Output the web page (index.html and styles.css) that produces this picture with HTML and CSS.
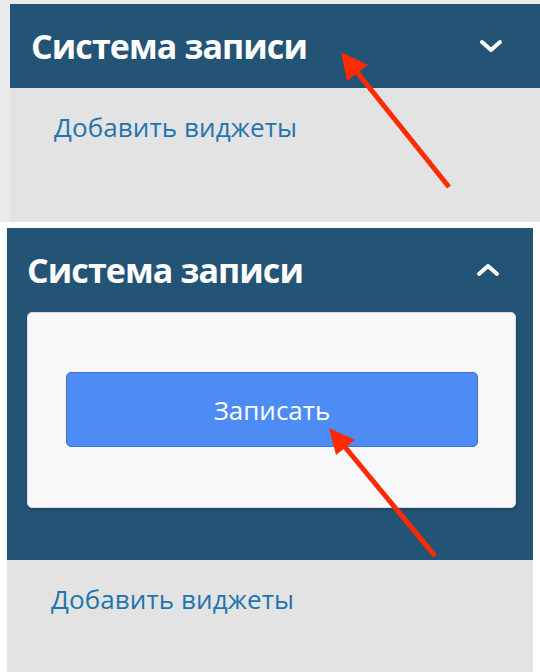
FILE: index.html
```html
<!DOCTYPE html>
<html lang="ru">
<head>
  <meta charset="UTF-8">
  <title>Система записи</title>
  <meta name="viewport" content="width=device-width, initial-scale=1.0">
  <link rel="stylesheet" href="styles.css">
</head>
<body>
  <div class="page">

    <!-- collapsed widget -->
    <section class="shot shot-closed">
      <div class="widget">
        <header class="widget-head">
          <h2 class="widget-title">Система записи</h2>
          <svg class="chev" width="24" height="14" viewBox="0 0 24 14">
            <polyline points="3,3 12,11 21,3" fill="none" stroke="#fff" stroke-width="4" stroke-linecap="round" stroke-linejoin="round"/>
          </svg>
        </header>
        <div class="widget-foot foot-closed">
          <a href="#" class="add-link">Добавить виджеты</a>
        </div>
      </div>
    </section>

    <!-- open widget -->
    <section class="shot shot-open">
      <div class="widget widget-open">
        <header class="widget-head head-open">
          <h2 class="widget-title">Система записи</h2>
          <svg class="chev" width="24" height="14" viewBox="0 0 24 14">
            <polyline points="3,11 12,3 21,11" fill="none" stroke="#fff" stroke-width="4" stroke-linecap="round" stroke-linejoin="round"/>
          </svg>
        </header>
        <div class="card">
          <button class="btn-book">Записать</button>
        </div>
      </div>
      <div class="widget-foot foot-open">
        <a href="#" class="add-link">Добавить виджеты</a>
      </div>
    </section>

    <!-- annotation arrows -->
    <svg class="arrows" width="540" height="672" viewBox="0 0 540 672">
      <line x1="449" y1="187" x2="352" y2="66" stroke="#ff2a00" stroke-width="5"/>
      <polygon points="341,52 368,65 347,81" fill="#ff2a00"/>
      <line x1="435" y1="556" x2="340" y2="441" stroke="#ff2a00" stroke-width="5"/>
      <polygon points="329,428 355,440 336,455" fill="#ff2a00"/>
    </svg>
  </div>
</body>
</html>
```

FILE: styles.css
```css
*{box-sizing:border-box;margin:0;padding:0}
html,body{background:#fff;height:100%}
body{font-family:"Open Sans",Arial,sans-serif;overflow:hidden}
.page{position:relative;width:540px;height:672px;overflow:hidden}

.shot-closed{
  background:#eaeaea;
  padding:4px 0 0 10px;
  height:222px;
}
.shot-open{
  margin:6px 7px 0 7px;
  width:526px;
}

.widget-head{
  display:flex;justify-content:space-between;align-items:center;
  background:#235375;
  height:84px;
  padding:0 37px 0 21px;
}
.widget-title{
  font-size:34px;font-weight:700;color:#fff;
  letter-spacing:-0.9px;
}
.chev{display:block}

.widget-foot{background:#e3e3e3}
.foot-closed{height:134px;padding:21px 0 0 44px}
.foot-open{height:120px;padding:21px 0 0 44px}
.add-link{
  font-size:26px;color:#1f75ad;text-decoration:none;
  letter-spacing:0.1px;
}

.widget-open{background:#235375;height:332px;padding-bottom:52px}
.head-open{height:84px;padding:0 33px 0 20px}

.card{
  margin:0 17px 0 20px;
  height:196px;
  background:#f8f8fa;
  border:1px solid #dcdce0;border-radius:5px;
  box-shadow:1px 2px 2px rgba(0,0,0,0.15);
  padding:59px 37px 0 38px;
}
.btn-book{
  display:block;width:100%;height:75px;
  background:#4d8bf5;color:#fff;
  border:1px solid #3b72d0;border-radius:5px;
  font-family:"Open Sans",Arial,sans-serif;font-size:26px;
}

.arrows{position:absolute;left:0;top:0;pointer-events:none}
```
